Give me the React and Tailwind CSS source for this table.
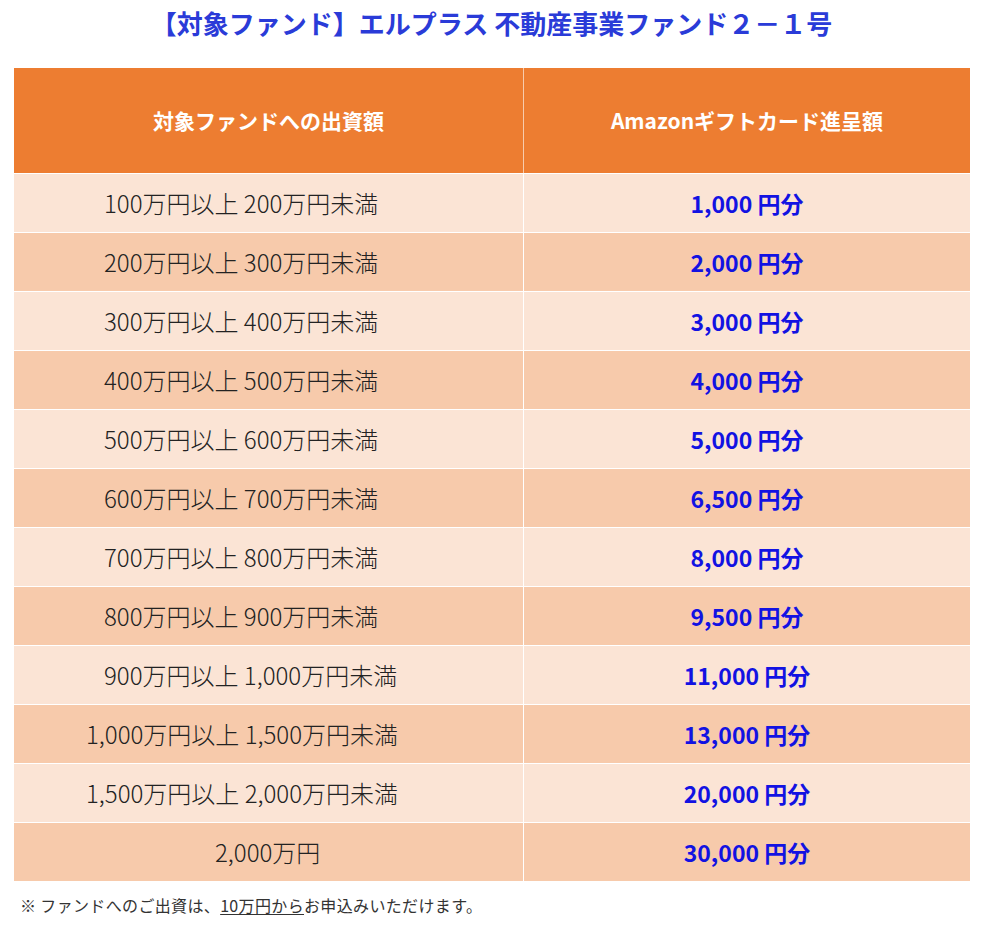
const rows = [
    ["100万円以上 200万円未満", "1,000 円分", "pl-[90px]"],
    ["200万円以上 300万円未満", "2,000 円分", "pl-[90px]"],
    ["300万円以上 400万円未満", "3,000 円分", "pl-[90px]"],
    ["400万円以上 500万円未満", "4,000 円分", "pl-[90px]"],
    ["500万円以上 600万円未満", "5,000 円分", "pl-[90px]"],
    ["600万円以上 700万円未満", "6,500 円分", "pl-[90px]"],
    ["700万円以上 800万円未満", "8,000 円分", "pl-[90px]"],
    ["800万円以上 900万円未満", "9,500 円分", "pl-[90px]"],
    ["900万円以上 1,000万円未満", "11,000 円分", "pl-[90px]"],
    ["1,000万円以上 1,500万円未満", "13,000 円分", "pl-[72px]"],
    ["1,500万円以上 2,000万円未満", "20,000 円分", "pl-[72px]"],
    ["2,000万円", "30,000 円分", "pl-[201px]"],
]

function App() {
    return (
        <div className="w-[983px] h-[945px] bg-white font-['Noto_Sans_CJK_JP',sans-serif]">
            <h1 className="h-[44px] flex items-center justify-center text-[26px] font-bold text-[#2a3bd8]">
                【対象ファンド】エルプラス 不動産事業ファンド２－１号
            </h1>

            <div className="mt-[24px] mx-[14px] w-[956px]">
                <div className="flex h-[105px] bg-[#ed7d31] text-white font-bold text-[21px]">
                    <div className="w-[510px] grid place-items-center border-r border-white/60">対象ファンドへの出資額</div>
                    <div className="flex-1 grid place-items-center">Amazonギフトカード進呈額</div>
                </div>

                {rows.map((row, i) => (
                    <div key={i} className={`flex h-[59px] border-t border-white ${i % 2 == 0 ? 'bg-[#fbe4d5]' : 'bg-[#f7caab]'}`}>
                        <div className={`w-[510px] flex items-center border-r border-white text-[24px] font-light text-[#222] whitespace-nowrap ${row[2]}`}>{row[0]}</div>
                        <div className="flex-1 grid place-items-center text-[23px] font-bold text-[#1212e2]">{row[1]}</div>
                    </div>
                ))}
            </div>

            <p className="mt-[12px] ml-[20px] text-[16px] tracking-[0.35px] text-[#333]">
                ※ ファンドへのご出資は、<span className="underline underline-offset-2">10万円から</span>お申込みいただけます。
            </p>
        </div>
    )
}

export default App
